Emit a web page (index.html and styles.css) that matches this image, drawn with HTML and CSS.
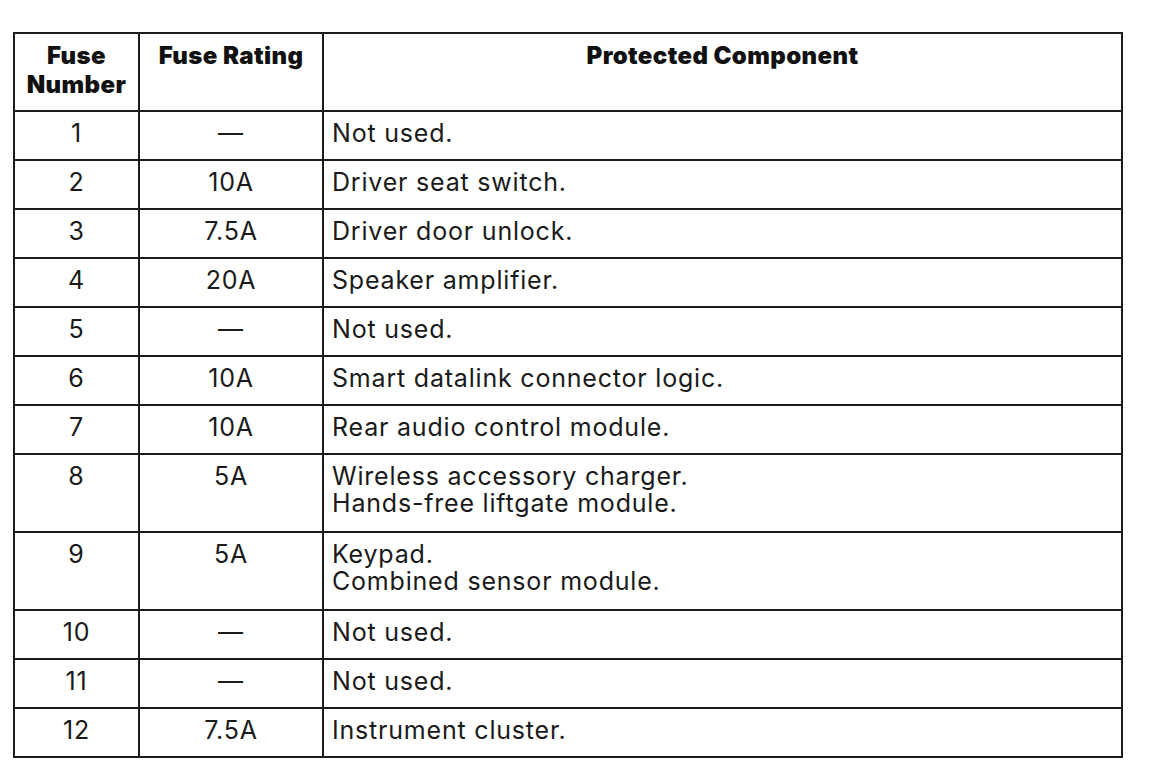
FILE: index.html
```html
<!DOCTYPE html>
<html lang="en">
<head>
<meta charset="utf-8">
<title>Fuse table</title>
<link rel="stylesheet" href="styles.css">
</head>
<body>
<table class="fuse-table">
  <colgroup>
    <col class="col-num">
    <col class="col-rating">
    <col class="col-comp">
  </colgroup>
  <thead>
    <tr class="head-row">
      <th>Fuse<br>Number</th>
      <th>Fuse Rating</th>
      <th>Protected Component</th>
    </tr>
  </thead>
  <tbody>
    <tr><td class="c">1</td><td class="c">—</td><td>Not used.</td></tr>
    <tr><td class="c">2</td><td class="c">10A</td><td>Driver seat switch.</td></tr>
    <tr><td class="c">3</td><td class="c">7.5A</td><td>Driver door unlock.</td></tr>
    <tr><td class="c">4</td><td class="c">20A</td><td>Speaker amplifier.</td></tr>
    <tr><td class="c">5</td><td class="c">—</td><td>Not used.</td></tr>
    <tr><td class="c">6</td><td class="c">10A</td><td>Smart datalink connector logic.</td></tr>
    <tr><td class="c">7</td><td class="c">10A</td><td>Rear audio control module.</td></tr>
    <tr class="tall"><td class="c">8</td><td class="c">5A</td><td>Wireless accessory charger.<br>Hands-free liftgate module.</td></tr>
    <tr class="tall"><td class="c">9</td><td class="c">5A</td><td>Keypad.<br>Combined sensor module.</td></tr>
    <tr><td class="c">10</td><td class="c">—</td><td>Not used.</td></tr>
    <tr><td class="c">11</td><td class="c">—</td><td>Not used.</td></tr>
    <tr><td class="c">12</td><td class="c">7.5A</td><td>Instrument cluster.</td></tr>
  </tbody>
</table>
</body>
</html>
```
FILE: styles.css
```css
html, body {
  margin: 0;
  background: #ffffff;
}
body {
  padding: 32px 0 0 13px;
  font-family: "Inter", "Open Sans", "Liberation Sans", sans-serif;
  color: #1a1a1a;
}
.fuse-table {
  border-collapse: collapse;
  table-layout: fixed;
  width: 1108px;
}
.col-num { width: 125px; }
.col-rating { width: 184px; }
.col-comp { width: 799px; }

.fuse-table th,
.fuse-table td {
  border: 2px solid #1c1c1c;
  vertical-align: top;
  box-sizing: border-box;
}
.fuse-table th {
  height: 78px;
  padding: 7px 2px 0;
  font-size: 24px;
  font-weight: 900;
  line-height: 29px;
  text-align: center;
  letter-spacing: 0.4px;
  color: #111111;
}
.fuse-table td {
  height: 49px;
  padding: 8px 8px 0;
  font-size: 25px;
  font-weight: 400;
  line-height: 27px;
  text-align: left;
  letter-spacing: 0.8px;
}
.fuse-table td.c {
  text-align: center;
}
.fuse-table tr.tall td {
  height: 78px;
}
```
